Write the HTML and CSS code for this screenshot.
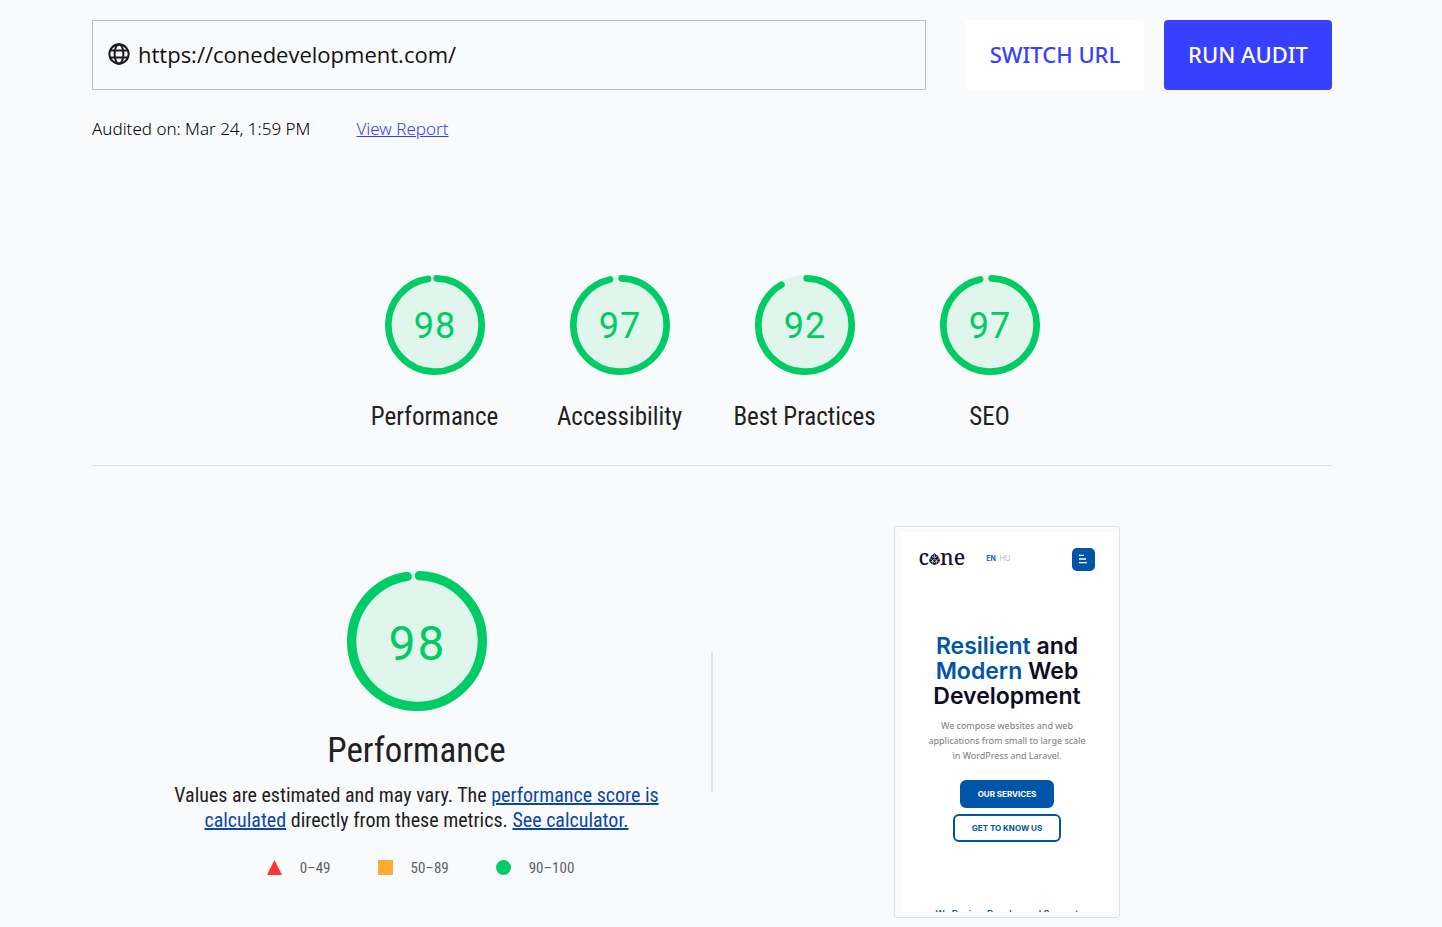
FILE: index.html
```html
<!DOCTYPE html>
<html lang="en">
<head>
<meta charset="utf-8">
<title>Audit results</title>
<meta name="viewport" content="width=device-width, initial-scale=1">
<link rel="stylesheet" href="styles.css">
</head>
<body>
<main class="page">
  <form class="toolbar">
    <label class="url-field">
      <svg class="globe" viewBox="0 0 24 24" role="img" aria-label="URL"><g fill="none" stroke="currentColor" stroke-width="2.2"><circle cx="12" cy="12" r="10.5"/><ellipse cx="12" cy="12" rx="4.8" ry="10.5"/><path d="M2.5 8.2h19M2.5 15.8h19"/></g></svg>
      <input class="url-input" type="text" name="url" value="https://conedevelopment.com/">
    </label>
    <div class="actions">
      <button class="button" type="button">SWITCH URL</button>
      <button class="button button-primary" type="button">RUN AUDIT</button>
    </div>
  </form>
  <div class="audit-meta">
    <span>Audited on: Mar 24, 1:59 PM</span>
    <a class="report-link" href="#report">View Report</a>
  </div>

  <section class="scores">
    <div class="score">
      <div class="gauge"><svg class="dial" viewBox="0 0 120 120"><circle class="dial-base" cx="60" cy="60" r="60"/><circle class="dial-arc" cx="60" cy="60" r="56" stroke-dasharray="340.8 351.86" transform="rotate(-87.95 60 60)"/></svg><span class="gauge-value">98</span></div>
      <span class="score-label">Performance</span>
    </div>
    <div class="score">
      <div class="gauge"><svg class="dial" viewBox="0 0 120 120"><circle class="dial-base" cx="60" cy="60" r="60"/><circle class="dial-arc" cx="60" cy="60" r="56" stroke-dasharray="337.3 351.86" transform="rotate(-87.95 60 60)"/></svg><span class="gauge-value">97</span></div>
      <span class="score-label">Accessibility</span>
    </div>
    <div class="score">
      <div class="gauge"><svg class="dial" viewBox="0 0 120 120"><circle class="dial-base" cx="60" cy="60" r="60"/><circle class="dial-arc" cx="60" cy="60" r="56" stroke-dasharray="319.7 351.86" transform="rotate(-87.95 60 60)"/></svg><span class="gauge-value">92</span></div>
      <span class="score-label">Best Practices</span>
    </div>
    <div class="score">
      <div class="gauge"><svg class="dial" viewBox="0 0 120 120"><circle class="dial-base" cx="60" cy="60" r="60"/><circle class="dial-arc" cx="60" cy="60" r="56" stroke-dasharray="337.3 351.86" transform="rotate(-87.95 60 60)"/></svg><span class="gauge-value">97</span></div>
      <span class="score-label">SEO</span>
    </div>
  </section>

  <section class="detail">
    <div class="summary">
      <div class="gauge gauge-large"><svg class="dial" viewBox="0 0 120 120"><circle class="dial-base" cx="60" cy="60" r="60"/><circle class="dial-arc" cx="60" cy="60" r="56" stroke-dasharray="340.8 351.86" transform="rotate(-87.95 60 60)"/></svg><span class="gauge-value">98</span></div>
      <h2 class="summary-title">Performance</h2>
      <p class="summary-text">Values are estimated and may vary. The <a href="#scoring">performance score is<br>calculated</a> directly from these metrics. <a href="#calculator">See calculator.</a></p>
      <ul class="scale">
        <li class="scale-item"><svg class="marker" viewBox="0 0 15 15"><path fill="#f33" d="M7.5 0 15 15H0z"/></svg>0–49</li>
        <li class="scale-item"><svg class="marker" viewBox="0 0 15 15"><path fill="#fa3" d="M0 0h15v15H0z"/></svg>50–89</li>
        <li class="scale-item"><svg class="marker" viewBox="0 0 15 15"><circle fill="#0c6" cx="7.5" cy="7.5" r="7.5"/></svg>90–100</li>
      </ul>
    </div>
    <div class="divider"></div>
    <div class="preview-column">
      <div class="preview">
        <div class="site">
          <header class="site-header">
            <span class="site-logo">c<svg class="cone" viewBox="0 0 12 13"><path fill="#111128" d="M6 0 8 2l1.800 1L10.500 5 12 7.500 11.300 10 9 12 6 13 3 12 .7 10 0 7.500 1.500 5 2.200 3 4 2z"/><path fill="none" stroke="#fff" stroke-width=".7" d="M3 3.500 6 5l3-1.500M1.500 6.500 4 8l2-1.500L8 8l2.500-1.500M1.500 10 4 8.500 6 10.500 8 8.500l2.500 1.500M6 1.500V5M4 8v3.500M8 8v3.500"/></svg>ne</span>
            <span class="site-lang"><b>EN</b> HU</span>
            <button class="site-menu" type="button" aria-label="Menu"><svg class="menu-icon" viewBox="0 0 10 10"><path fill="none" stroke="#fff" stroke-width="1.4" d="M1 1.4h5M1 5h7M1 8.6h8"/></svg></button>
          </header>
          <h3 class="site-title"><em>Resilient</em> and<br><em>Modern</em> Web<br>Development</h3>
          <p class="site-text">We compose websites and web<br>applications from small to large scale<br>in WordPress and Laravel.</p>
          <button class="site-button site-button-solid" type="button">OUR SERVICES</button>
          <button class="site-button" type="button">GET TO KNOW US</button>
          <p class="site-next">We Design, Develop and Support</p>
        </div>
      </div>
    </div>
  </section>
</main>
</body>
</html>
```
FILE: styles.css
```css
* { box-sizing: border-box; }
body {
  margin: 0;
  background: #f8fafc;
  color: #000;
  font-family: "Open Sans", "Noto Sans", sans-serif;
}
button { font-family: inherit; cursor: pointer; }
.page { padding: 20px 110px 9px 92px; }

.toolbar { display: flex; gap: 40px; }
.url-field {
  flex: 1;
  display: flex;
  align-items: center;
  gap: 8px;
  height: 70px;
  padding: 0 15px 2px;
  border: 1px solid #bcbec0;
}
.globe { width: 22px; height: 22px; color: #1c1c1e; }
.url-input {
  flex: 1;
  min-width: 0;
  padding: 0;
  border: 0;
  background: none;
  color: #111;
  font: 500 22px/30px "Open Sans", sans-serif;
}
.actions { display: flex; gap: 20px; }
.button {
  width: 178px;
  padding: 0 0 2px;
  border: 0;
  border-radius: 4px;
  background: #fff;
  color: #3740ff;
  font: 500 22px/30px "Noto Sans", sans-serif;
}
.button-primary { width: 168px; background: #3740ff; color: #fff; }
.audit-meta {
  display: flex;
  gap: 46px;
  margin-top: 27px;
  font: 300 17px/24px "Noto Sans", sans-serif;
}
.report-link { color: #3740ff; }

.scores {
  display: flex;
  justify-content: center;
  margin-top: 134px;
  padding-bottom: 32px;
  border-bottom: 1px solid #dfe1e3;
  color: #212121;
  font-family: "Roboto Condensed", "Liberation Sans Narrow", Roboto, sans-serif;
}
.score { display: flex; flex-direction: column; align-items: center; gap: 25px; width: 185px; }
.score-label { font-size: 25px; line-height: 33px; white-space: nowrap; }
.gauge { display: grid; place-items: center; width: 100px; height: 100px; }
.gauge > * { grid-area: 1 / 1; }
.dial { width: 100%; height: 100%; }
.dial-base { fill: #e0f5eb; }
.dial-arc { fill: none; stroke: #0c6; stroke-width: 8; stroke-linecap: round; }
.gauge-value { padding: 2px 0 0 1px; color: #0c6; font: 36px/40px Roboto, sans-serif; letter-spacing: 1px; }
.gauge-large { width: 140px; height: 140px; }
.gauge-large .gauge-value { padding: 6px 0 0 2px; font-size: 48px; line-height: 56px; letter-spacing: 2px; }

.detail {
  display: grid;
  grid-template-columns: 1fr 2px 1fr;
  align-items: center;
  padding: 60px 30px 0;
  color: #212121;
  font-family: "Roboto Condensed", "Liberation Sans Narrow", Roboto, sans-serif;
}
.summary { display: flex; flex-direction: column; align-items: center; padding-top: 4px; }
.summary-title { margin: 16px 0 0; font-size: 35px; line-height: 48px; font-weight: 400; }
.summary-text { margin: 8px 0 0; font-size: 20px; line-height: 25px; text-align: center; }
.summary-text a { color: #0c47a1; text-decoration-thickness: 2px; }
.scale {
  display: flex;
  gap: 47px;
  margin: 25px 0 0;
  padding: 0 0 0 8px;
  list-style: none;
  color: #616161;
  font-size: 15px;
  line-height: 20px;
}
.scale-item { display: flex; align-items: center; gap: 18px; }
.marker { width: 15px; height: 15px; }
.divider { height: 140px; background: #dfe1e3; }
.preview-column { display: flex; justify-content: center; padding-right: 2px; }
.preview { padding: 5px 5px 5px 6px; border: 1px solid #dfe1e3; border-radius: 3px; }
.site {
  display: flex;
  flex-direction: column;
  align-items: center;
  width: 213px;
  height: 380px;
  overflow: hidden;
  background: #fff;
  font-family: Inter, sans-serif;
}
.site-header { display: flex; align-items: center; align-self: stretch; padding: 13px 19px 0 18px; }
.site-logo { padding-bottom: 4px; color: #111128; font: 500 21px/24px "Noto Serif", "DejaVu Serif", serif; }
.cone { width: 11px; height: 12px; }
.site-lang { margin-left: 21px; color: #b4b4b4; font-size: 7px; line-height: 10px; }
.site-lang b { margin-right: 2px; color: #0b66b5; }
.site-menu {
  display: grid;
  place-items: center;
  width: 23px;
  height: 23px;
  margin-left: auto;
  padding: 0;
  border: 0;
  border-radius: 5px;
  background: #0055a8;
}
.menu-icon { width: 10px; height: 10px; }
.site-title { margin: 61px 0 0; color: #0c0c20; font-size: 23px; line-height: 25px; font-weight: 600; text-align: center; }
.site-title em { color: #0055a8; font-style: normal; }
.site-text { margin: 9px 0 0; color: #7c7c7c; font: 9px/15px "Noto Sans", sans-serif; text-align: center; }
.site-button {
  flex: none;
  height: 28px;
  margin-top: 6px;
  padding: 0 17px;
  border: 2px solid #0055a8;
  border-radius: 6px;
  background: #fff;
  color: #0055a8;
  font-size: 8px;
  font-weight: 700;
}
.site-button-solid { margin-top: 17px; padding: 0 16px; background: #0055a8; color: #fff; }
.site-next { flex: none; margin: 65px 0 0; color: #0055a8; font-size: 9px; line-height: 14px; font-weight: 600; white-space: nowrap; }
```
